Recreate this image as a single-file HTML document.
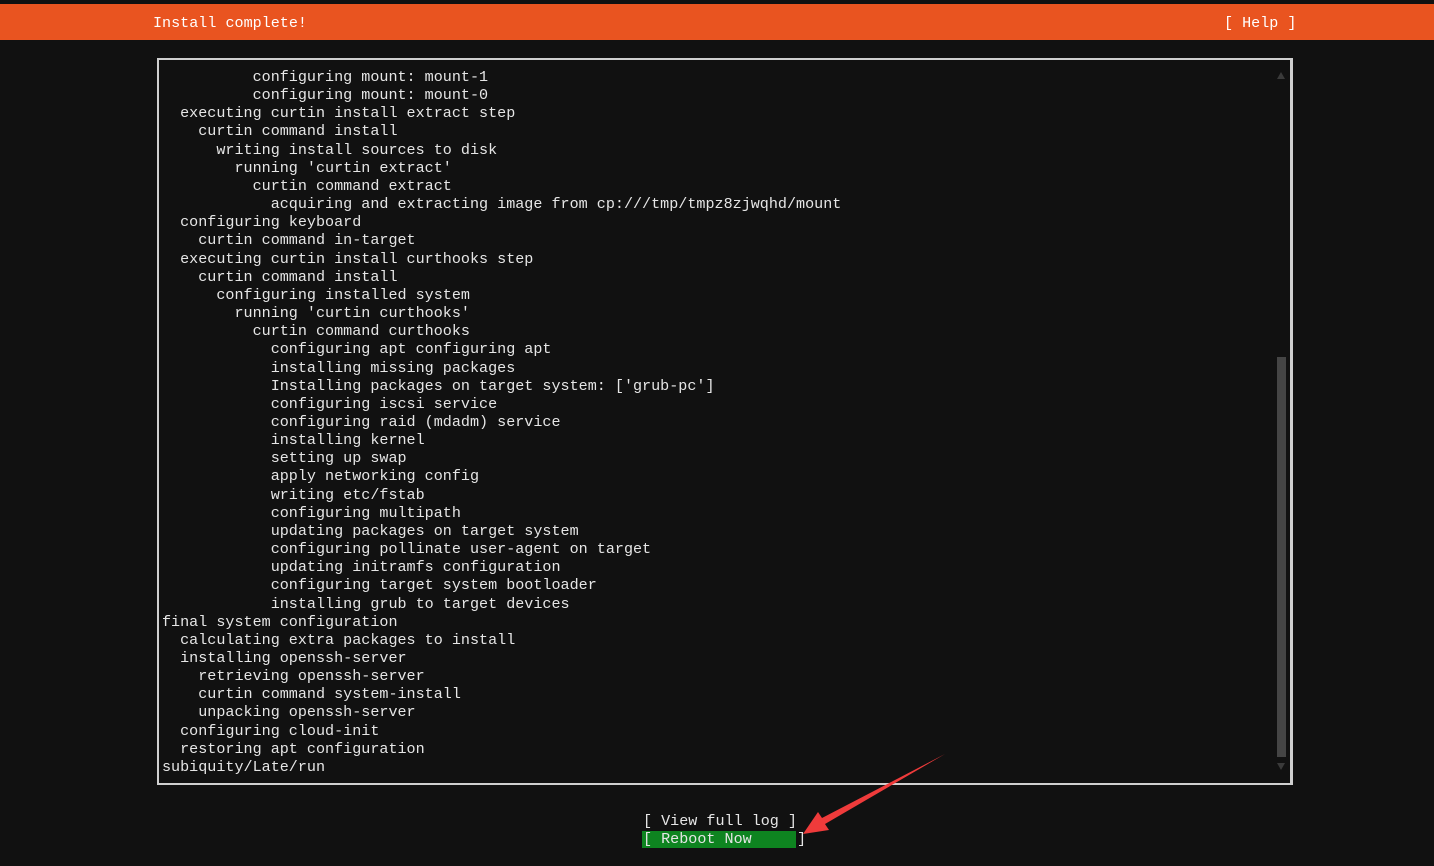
<!DOCTYPE html>
<html><head><meta charset="utf-8"><style>
body{margin:0;width:1434px;height:866px;background:#111;overflow:hidden;position:relative;font-family:"Liberation Mono",monospace;font-size:15.1px;color:#e6e6e6}
.t{position:absolute;white-space:pre;line-height:18.16px}
#bar{position:absolute;left:0;top:4px;width:1434px;height:36px;background:#e95420}
#box{position:absolute;left:157px;top:58px;width:1131px;height:723px;border:2px solid #d0d0d0;border-right-width:3px;border-bottom-width:2px}
</style></head><body>
<div id="bar"></div>
<div class="t" style="left:153px;top:14px;color:#fff">Install complete!</div>
<div class="t" style="left:1224px;top:14px;color:#fff">[ Help ]</div>
<div id="box"></div>
<div style="position:absolute;left:1277px;top:357px;width:9px;height:400px;background:#454545"></div>
<div style="position:absolute;left:1277px;top:72px;width:0;height:0;border-left:4px solid transparent;border-right:4px solid transparent;border-bottom:7px solid #3a3a3a"></div>
<div style="position:absolute;left:1277px;top:763px;width:0;height:0;border-left:4px solid transparent;border-right:4px solid transparent;border-top:7px solid #3a3a3a"></div>
<div class="t" style="left:162px;top:68px">          configuring mount: mount-1
          configuring mount: mount-0
  executing curtin install extract step
    curtin command install
      writing install sources to disk
        running 'curtin extract'
          curtin command extract
            acquiring and extracting image from cp:///tmp/tmpz8zjwqhd/mount
  configuring keyboard
    curtin command in-target
  executing curtin install curthooks step
    curtin command install
      configuring installed system
        running 'curtin curthooks'
          curtin command curthooks
            configuring apt configuring apt
            installing missing packages
            Installing packages on target system: ['grub-pc']
            configuring iscsi service
            configuring raid (mdadm) service
            installing kernel
            setting up swap
            apply networking config
            writing etc/fstab
            configuring multipath
            updating packages on target system
            configuring pollinate user-agent on target
            updating initramfs configuration
            configuring target system bootloader
            installing grub to target devices
final system configuration
  calculating extra packages to install
  installing openssh-server
    retrieving openssh-server
    curtin command system-install
    unpacking openssh-server
  configuring cloud-init
  restoring apt configuration
subiquity/Late/run</div>
<div style="position:absolute;left:642px;top:831px;width:154px;height:17px;background:#0e8420"></div>
<div class="t" style="left:643px;top:812px">[ View full log ]
[ Reboot Now     ]</div>
<svg style="position:absolute;left:0;top:0" width="1434" height="866">
<polygon points="945,754 822,818 818,812 803,834 829,830 825,824" fill="#ef3b3b"/>
</svg>
</body></html>
